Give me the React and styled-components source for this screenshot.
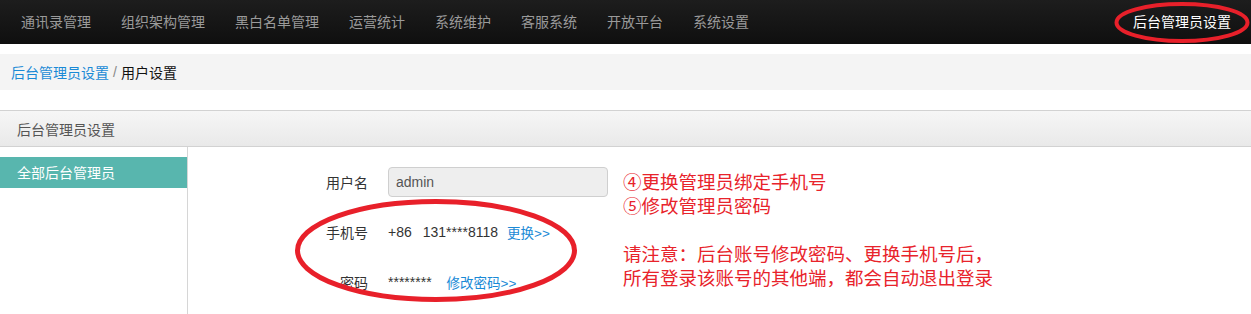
import React from 'react'
import styled, { createGlobalStyle } from 'styled-components'

const GlobalStyle = createGlobalStyle`
  body {
    margin: 0;
    background: #fff;
    font-family: "Liberation Sans", "Noto Sans CJK SC", sans-serif;
    font-size: 14px;
    color: #333;
  }
`

const navItems = ['通讯录管理', '组织架构管理', '黑白名单管理', '运营统计', '系统维护', '客服系统', '开放平台', '系统设置']

const App = () => {
  return (
    <Page>
      <GlobalStyle />
      <NavBar>
        <NavList>
          {navItems.map((item) => (
            <NavItem key={item}>{item}</NavItem>
          ))}
        </NavList>
        <NavItem $active>后台管理员设置</NavItem>
      </NavBar>

      <Breadcrumb>
        <a>后台管理员设置</a>
        <Sep>/</Sep>
        <span>用户设置</span>
      </Breadcrumb>

      <Panel>
        <PanelHeading>后台管理员设置</PanelHeading>
        <PanelBody>
          <Sidebar>
            <SideItem $active>全部后台管理员</SideItem>
          </Sidebar>
          <Main>
            <Form>
              <Row>
                <Label>用户名</Label>
                <Input value="admin" readOnly />
              </Row>
              <Row>
                <Label>手机号</Label>
                <Value>+86</Value>
                <Value style={{ marginLeft: 11 }}>131****8118</Value>
                <Action>更换&gt;&gt;</Action>
              </Row>
              <Row>
                <Label>密码</Label>
                <Value>********</Value>
                <Action $gap={15}>修改密码&gt;&gt;</Action>
              </Row>
            </Form>
            <Note>
              <p>④更换管理员绑定手机号</p>
              <p>⑤修改管理员密码</p>
              <br />
              <p>请注意：后台账号修改密码、更换手机号后，</p>
              <p>所有登录该账号的其他端，都会自动退出登录</p>
            </Note>
          </Main>
        </PanelBody>
      </Panel>

      {/* red hand-drawn annotation marks */}
      <Mark width="140" height="46" $left={1112} $top={0}>
        <ellipse cx="70" cy="22.5" rx="65.5" ry="18.5" fill="none" stroke="#e8202a" strokeWidth="4" />
      </Mark>
      <Mark width="290" height="110" $left={291} $top={196}>
        <ellipse cx="145" cy="54.5" rx="138.5" ry="49" fill="none" stroke="#e8202a" strokeWidth="5" />
      </Mark>
    </Page>
  )
}

export default App

const Page = styled.div`
  position: relative;
  width: 1251px;
  height: 314px;
  overflow: hidden;
`

const NavBar = styled.div`
  height: 44px;
  display: flex;
  justify-content: space-between;
  align-items: center;
  padding: 0 5px 0 6px;
  background: linear-gradient(to bottom, #1d1d1d, #0f0f0f);
`

const NavList = styled.div`
  display: flex;
`

const NavItem = styled.div`
  padding: 0 15px;
  line-height: 44px;
  font-size: 14px;
  color: ${(p) => (p.$active ? '#fff' : '#9a9a9a')};
`

const Breadcrumb = styled.div`
  margin-top: 10px;
  height: 36px;
  display: flex;
  align-items: center;
  padding: 0 11px;
  background: #f4f4f4;
  font-size: 14px;
  color: #111;

  a {
    color: #1a8ad6;
  }
`

const Sep = styled.span`
  color: #888;
  padding: 0 4px;
`

const Panel = styled.div`
  margin-top: 20px;
  border-top: 1px solid #d2d2d2;
`

const PanelHeading = styled.div`
  height: 35px;
  display: flex;
  align-items: center;
  padding: 0 17px;
  background: linear-gradient(to bottom, #f6f6f6, #e9e9e9);
  border-bottom: 1px solid #d2d2d2;
  color: #555;
  font-size: 14px;
`

const PanelBody = styled.div`
  display: flex;
  height: 200px;
`

const Sidebar = styled.div`
  width: 187px;
  padding-top: 10px;
  border-right: 1px solid #d6d6d6;
`

const SideItem = styled.div`
  height: 31px;
  display: flex;
  align-items: center;
  padding: 0 17px 2px;
  box-sizing: border-box;
  background: ${(p) => (p.$active ? '#58b6ae' : 'transparent')};
  color: ${(p) => (p.$active ? '#fff' : '#333')};
  font-size: 14px;
`

const Main = styled.div`
  display: flex;
  align-items: flex-start;
  padding: 20px 0 0 80px;
`

const Form = styled.div`
  display: flex;
  flex-direction: column;
  gap: 20px;
`

const Row = styled.div`
  height: 30px;
  display: flex;
  align-items: center;
`

const Label = styled.div`
  width: 100px;
  margin-right: 20px;
  text-align: right;
  color: #333;
  font-size: 14px;
`

const Input = styled.input`
  box-sizing: border-box;
  width: 220px;
  height: 30px;
  padding: 0 7px;
  border: 1px solid #cfcfcf;
  border-radius: 4px;
  background: #eee;
  color: #555;
  font-family: inherit;
  font-size: 14px;
  outline: none;
`

const Value = styled.span`
  color: #333;
  font-size: 14px;
`

const Action = styled.a`
  margin-left: ${(p) => p.$gap || 9}px;
  color: #1a8ad6;
  font-size: 13.5px;
`

const Note = styled.div`
  margin: 4px 0 0 15px;
  color: #e8232b;
  font-size: 18.5px;
  line-height: 24px;

  p {
    margin: 0;
  }

  br {
    display: block;
    content: '';
    height: 24px;
  }
`

const Mark = styled.svg`
  position: absolute;
  left: ${(p) => p.$left}px;
  top: ${(p) => p.$top}px;
  pointer-events: none;
`
